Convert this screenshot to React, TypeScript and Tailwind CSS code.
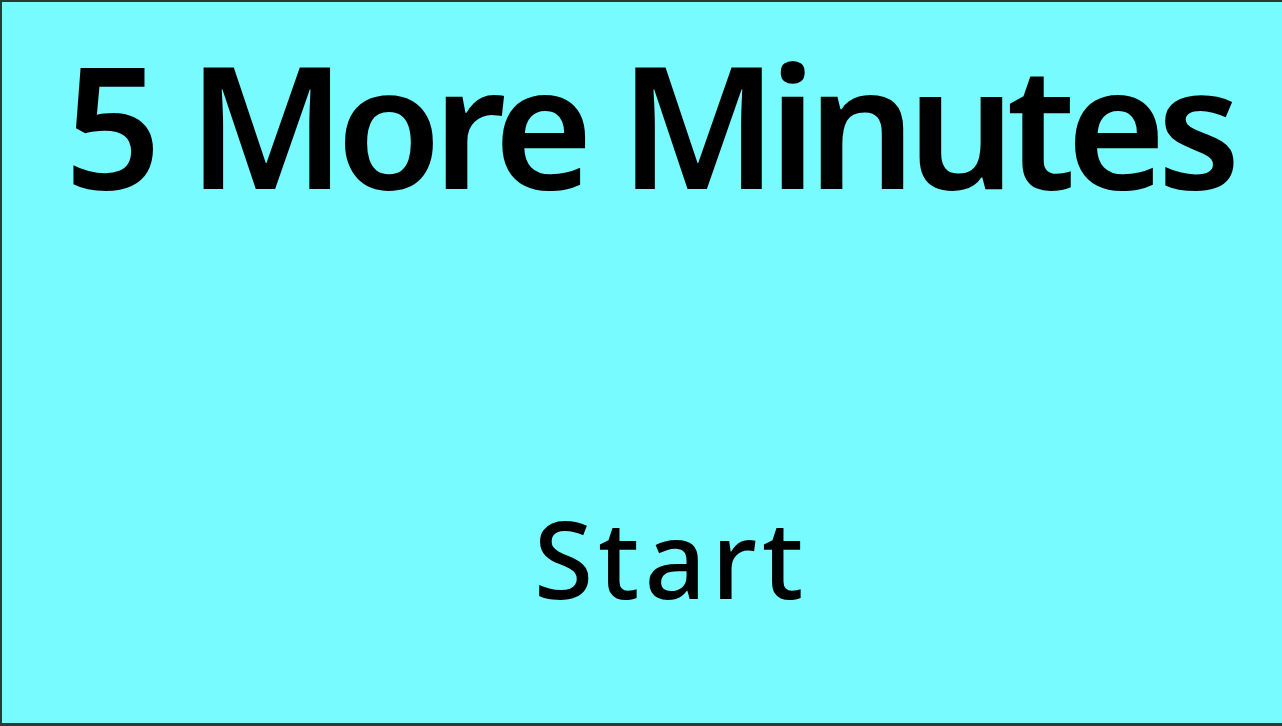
export default function App() {
  return (
    <div
      className="w-[1282px] h-[726px] bg-[#78fbfe] border-l-2 border-t-2 border-b-[3px] border-[#2e3838] flex flex-col items-center text-black"
      style={{ fontFamily: '"Comic Sans MS", "Noto Sans", sans-serif' }}
    >
      {/* Title */}
      <h1 className="mt-[36px] pl-[12px] text-[170px] leading-none font-semibold tracking-[-9px] whitespace-nowrap">
        5 More Minutes
      </h1>

      {/* Start button */}
      <button className="mt-[296px] pl-[58px] text-[108px] leading-none font-medium tracking-[5px]">
        Start
      </button>
    </div>
  );
}
